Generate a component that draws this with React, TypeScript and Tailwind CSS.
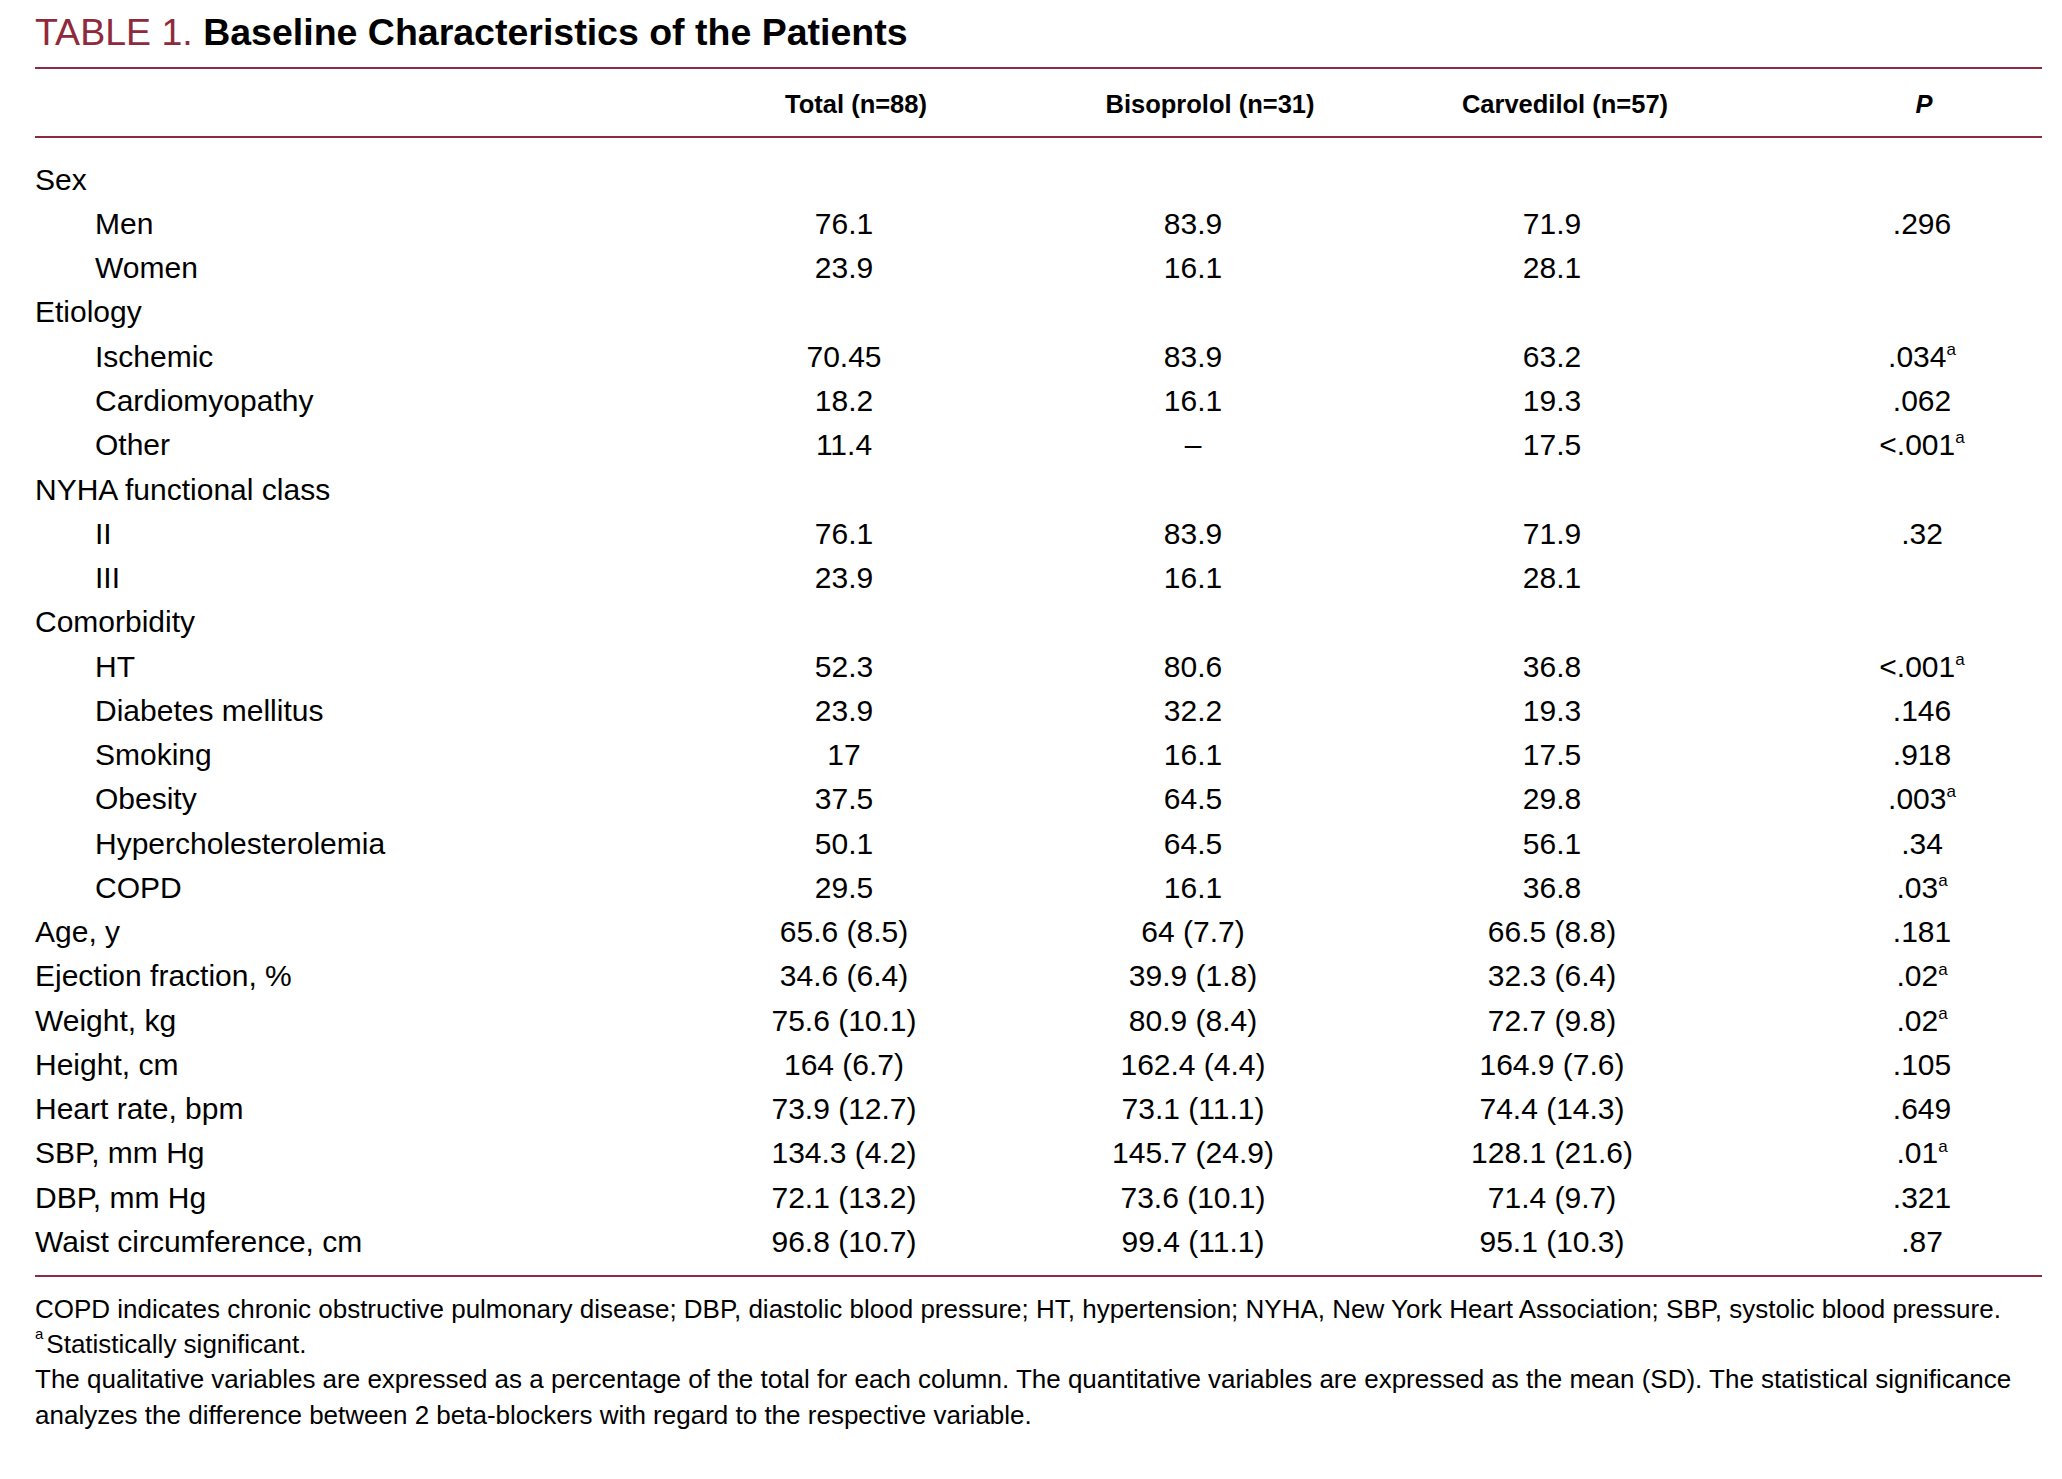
import React from 'react';

type Row = {
  label: string;
  indent?: boolean;
  total?: string;
  bis?: string;
  carv?: string;
  p?: string;
  sig?: boolean;
};

const rows: Row[] = [
  { label: 'Sex' },
  { label: 'Men', indent: true, total: '76.1', bis: '83.9', carv: '71.9', p: '.296' },
  { label: 'Women', indent: true, total: '23.9', bis: '16.1', carv: '28.1' },
  { label: 'Etiology' },
  { label: 'Ischemic', indent: true, total: '70.45', bis: '83.9', carv: '63.2', p: '.034', sig: true },
  { label: 'Cardiomyopathy', indent: true, total: '18.2', bis: '16.1', carv: '19.3', p: '.062' },
  { label: 'Other', indent: true, total: '11.4', bis: '–', carv: '17.5', p: '<.001', sig: true },
  { label: 'NYHA functional class' },
  { label: 'II', indent: true, total: '76.1', bis: '83.9', carv: '71.9', p: '.32' },
  { label: 'III', indent: true, total: '23.9', bis: '16.1', carv: '28.1' },
  { label: 'Comorbidity' },
  { label: 'HT', indent: true, total: '52.3', bis: '80.6', carv: '36.8', p: '<.001', sig: true },
  { label: 'Diabetes mellitus', indent: true, total: '23.9', bis: '32.2', carv: '19.3', p: '.146' },
  { label: 'Smoking', indent: true, total: '17', bis: '16.1', carv: '17.5', p: '.918' },
  { label: 'Obesity', indent: true, total: '37.5', bis: '64.5', carv: '29.8', p: '.003', sig: true },
  { label: 'Hypercholesterolemia', indent: true, total: '50.1', bis: '64.5', carv: '56.1', p: '.34' },
  { label: 'COPD', indent: true, total: '29.5', bis: '16.1', carv: '36.8', p: '.03', sig: true },
  { label: 'Age, y', total: '65.6 (8.5)', bis: '64 (7.7)', carv: '66.5 (8.8)', p: '.181' },
  { label: 'Ejection fraction, %', total: '34.6 (6.4)', bis: '39.9 (1.8)', carv: '32.3 (6.4)', p: '.02', sig: true },
  { label: 'Weight, kg', total: '75.6 (10.1)', bis: '80.9 (8.4)', carv: '72.7 (9.8)', p: '.02', sig: true },
  { label: 'Height, cm', total: '164 (6.7)', bis: '162.4 (4.4)', carv: '164.9 (7.6)', p: '.105' },
  { label: 'Heart rate, bpm', total: '73.9 (12.7)', bis: '73.1 (11.1)', carv: '74.4 (14.3)', p: '.649' },
  { label: 'SBP, mm Hg', total: '134.3 (4.2)', bis: '145.7 (24.9)', carv: '128.1 (21.6)', p: '.01', sig: true },
  { label: 'DBP, mm Hg', total: '72.1 (13.2)', bis: '73.6 (10.1)', carv: '71.4 (9.7)', p: '.321' },
  { label: 'Waist circumference, cm', total: '96.8 (10.7)', bis: '99.4 (11.1)', carv: '95.1 (10.3)', p: '.87' },
];

const Sup = () => <sup className="text-[17px] top-[-0.7em]">a</sup>;

export default function App() {
  return (
    <div className="min-h-screen bg-white text-black font-['Liberation_Sans',Arial,sans-serif]">
      <div className="pl-[35px] pr-[20px]">
        {/* title */}
        <div className="h-[67px] pt-[14px] text-[37.5px] leading-none">
          <span className="text-[#8e2a3b]">TABLE 1. </span>
          <span className="font-bold">Baseline Characteristics of the Patients</span>
        </div>

        {/* header */}
        <div className="border-t-2 border-b-2 border-[#8b2b3d] grid grid-cols-[635px_348px_350px_368px_1fr] h-[71px] pt-[3px] items-center text-[25.5px] font-bold">
          <div></div>
          <div className="text-center pl-[24px]">Total (n=88)</div>
          <div className="text-center pl-[34px]">Bisoprolol (n=31)</div>
          <div className="text-center pl-[26px]">Carvedilol (n=57)</div>
          <div className="text-center pl-[70px] italic">P</div>
        </div>

        {/* body */}
        <div className="pt-[19px] pb-[11px] border-b-2 border-[#8b2b3d] grid grid-cols-[635px_348px_350px_368px_1fr] auto-rows-[44.27px] items-center text-[30px]">
          {rows.map((r, i) => (
            <React.Fragment key={i}>
              <div className={r.indent ? 'pl-[60px]' : ''}>{r.label}</div>
              <div className="text-center">{r.total}</div>
              <div className="text-center">{r.bis}</div>
              <div className="text-center">{r.carv}</div>
              <div className="text-center pl-[66px]">
                {r.p}
                {r.sig && <Sup />}
              </div>
            </React.Fragment>
          ))}
        </div>

        {/* footnotes */}
        <div className="pt-[15px] text-[26px] leading-[35.3px]">
          <p>
            COPD indicates chronic obstructive pulmonary disease; DBP, diastolic blood pressure; HT, hypertension; NYHA,
            New York Heart Association; SBP, systolic blood pressure.
          </p>
          <p>
            <sup className="text-[15px] top-[-0.9em] mr-[3px]">a</sup>Statistically significant.
          </p>
          <p>
            The qualitative variables are expressed as a percentage of the total for each column. The quantitative
            variables are expressed as the mean (SD). The statistical significance
            <br />
            analyzes the difference between 2 beta-blockers with regard to the respective variable.
          </p>
        </div>
      </div>
    </div>
  );
}
